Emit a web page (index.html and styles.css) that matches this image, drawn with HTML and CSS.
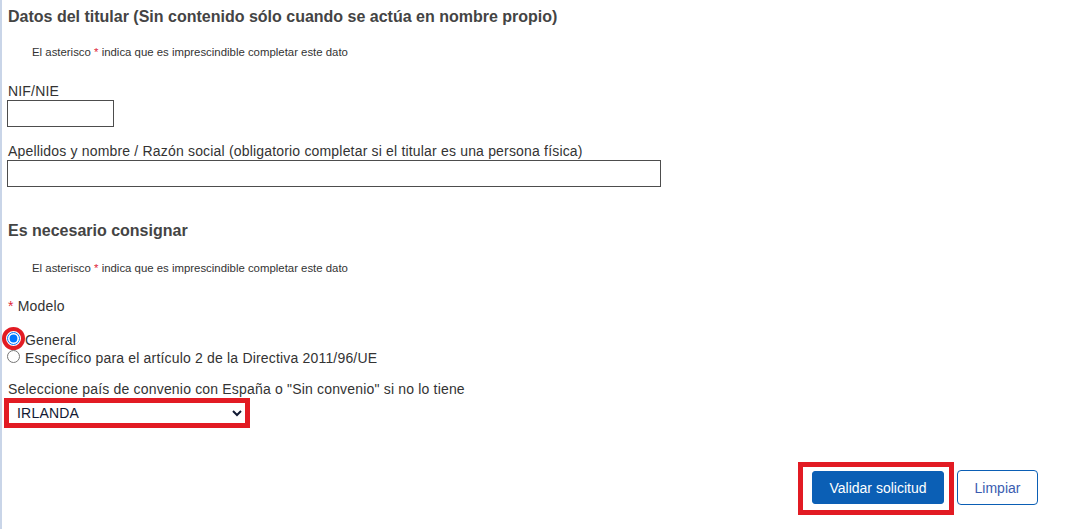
FILE: index.html
```html
<!DOCTYPE html>
<html lang="es">
<head>
<meta charset="utf-8">
<title>Datos del titular</title>
<link rel="stylesheet" href="styles.css">
</head>
<body>
<div class="page">
  <h2 class="section-title first">Datos del titular (Sin contenido sólo cuando se actúa en nombre propio)</h2>
  <p class="note">El asterisco <span class="req">*</span> indica que es imprescindible completar este dato</p>

  <label class="field-label nif-label" for="nif">NIF/NIE</label>
  <input class="text-input nif" id="nif" type="text">

  <label class="field-label name-label" for="nombre">Apellidos y nombre / Razón social (obligatorio completar si el titular es una persona física)</label>
  <input class="text-input nombre" id="nombre" type="text">

  <h2 class="section-title second">Es necesario consignar</h2>
  <p class="note">El asterisco <span class="req">*</span> indica que es imprescindible completar este dato</p>

  <div class="field-label modelo"><span class="req">*</span> Modelo</div>
  <div class="radios">
    <label class="radio-row"><span class="radio-wrap highlighted"><input type="radio" name="modelo" checked></span>General</label>
    <label class="radio-row"><span class="radio-wrap"><input type="radio" name="modelo"></span>Específico para el artículo 2 de la Directiva 2011/96/UE</label>
  </div>

  <label class="field-label pais-label" for="pais">Seleccione país de convenio con España o "Sin convenio" si no lo tiene</label>
  <div class="select-box">
    <select id="pais" class="select">
      <option>IRLANDA</option>
    </select>
  </div>

  <div class="actions">
    <div class="btn-frame"><button class="btn primary" type="button">Validar solicitud</button></div>
    <button class="btn secondary" type="button">Limpiar</button>
  </div>
</div>
</body>
</html>
```

FILE: styles.css
```css
html, body {
  margin: 0;
  padding: 0;
  background: #ffffff;
}
body {
  font-family: "Liberation Sans", Arial, sans-serif;
  color: #333333;
}
.page {
  border-left: 2px solid #c9d5e8;
  padding: 7px 0 0 5px;
  min-height: 522px;
  display: flex;
  flex-direction: column;
  align-items: flex-start;
}
.section-title {
  margin: 0;
  padding-left: 1px;
  font-size: 16px;
  line-height: 20px;
  font-weight: bold;
  color: #444444;
}
.section-title.second {
  margin-top: 34px;
}
.note {
  margin: 17px 0 0 0;
  padding-left: 25px;
  font-size: 11.4px;
  line-height: 16px;
  color: #333333;
}
.section-title.second + .note {
  margin-top: 19px;
}
.req {
  color: #e0283a;
}
.field-label {
  display: block;
  padding-left: 1px;
  font-size: 14px;
  letter-spacing: 0.18px;
  line-height: 18px;
  color: #333333;
}
.nif-label {
  margin-top: 22px;
}
.name-label {
  margin-top: 15px;
}
.text-input {
  box-sizing: border-box;
  height: 27px;
  margin: 0;
  border: 1px solid #4d4d4d;
  border-radius: 0;
  background: #fff;
  font-family: inherit;
  font-size: 14px;
  padding: 2px 4px;
}
.nif {
  width: 107px;
}
.nombre {
  width: 654px;
}
.modelo {
  margin-top: 21px;
}
.radios {
  margin-top: 16px;
  display: flex;
  flex-direction: column;
}
.radio-row {
  display: flex;
  align-items: center;
  font-size: 14px;
  letter-spacing: 0.18px;
  line-height: 18px;
  height: 18px;
  color: #333333;
}
.radio-wrap {
  position: relative;
  display: inline-flex;
  width: 14px;
  height: 14px;
  margin-right: 4px;
  margin-top: -3px;
}
.radio-wrap input {
  margin: 0;
  width: 13px;
  height: 13px;
}
.radio-wrap.highlighted::after {
  content: "";
  position: absolute;
  left: -5px;
  top: -5px;
  width: 15px;
  height: 15px;
  border: 4px solid #e21b23;
  border-radius: 50%;
}
.pais-label {
  margin-top: 13px;
}
.select-box {
  margin-left: -3px;
  border: 5px solid #e21b23;
  width: 236px;
  height: 20px;
  display: flex;
}
.select {
  width: 100%;
  height: 20px;
  margin: 0;
  border: 0;
  padding: 0 0 0 4px;
  background: #fff;
  font-family: inherit;
  font-size: 14px;
  letter-spacing: 0.2px;
  color: #111a33;
  outline: none;
}
.actions {
  align-self: stretch;
  margin-top: 34px;
  margin-right: 42px;
  display: flex;
  justify-content: flex-end;
  align-items: flex-start;
  gap: 3px;
}
.btn-frame {
  border: 5px solid #e21b23;
  padding: 4px 5px 6px 9px;
  display: flex;
}
.btn {
  font-family: inherit;
  font-size: 14px;
  cursor: pointer;
}
.primary {
  width: 132px;
  height: 33px;
  background: #0b5fb5;
  color: #ffffff;
  border: 1px solid #0b5fb5;
  border-radius: 3px;
}
.secondary {
  margin-top: 8px;
  width: 81px;
  height: 35px;
  background: #ffffff;
  color: #3a5cb0;
  border: 1px solid #0b5fb5;
  border-radius: 4px;
}
```
